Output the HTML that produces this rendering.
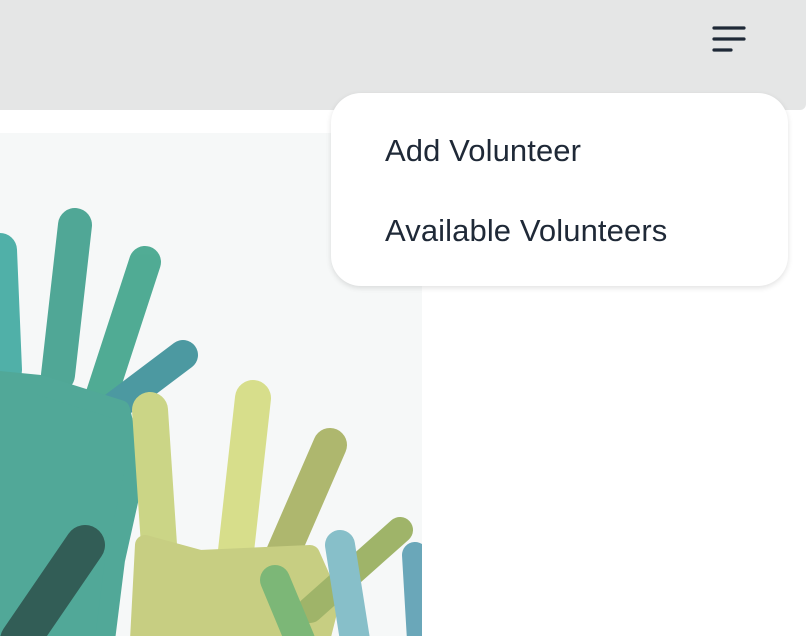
<!DOCTYPE html>
<html><head><meta charset="utf-8"><style>
html,body{margin:0;padding:0;width:806px;height:636px;overflow:hidden;background:#fff;font-family:"Liberation Sans",sans-serif}
.bar{position:absolute;left:0;top:0;width:806px;height:110px;background:#e5e6e6;border-bottom-right-radius:6px}
.img{position:absolute;left:0;top:133px;width:422px;height:503px;background:#f6f8f8;overflow:hidden}
.card{position:absolute;left:331px;top:93px;width:457px;height:193px;background:#fff;border-radius:30px;box-shadow:0 2px 6px rgba(0,0,0,.12)}
.card div{position:absolute;left:54px;font-size:31px;color:#1f2937;letter-spacing:0.1px}
</style></head><body>
<div class="bar"></div>
<svg style="position:absolute;left:710px;top:24px" width="40" height="32"><g stroke="#1f2937" stroke-width="3.2" stroke-linecap="round"><line x1="4" y1="4" x2="34" y2="4"/><line x1="4" y1="15" x2="34" y2="15"/><line x1="4" y1="26" x2="21" y2="26"/></g></svg>
<div class="img">
<svg width="422" height="503" viewBox="0 133 422 503">
<g stroke-linecap="round" stroke-linejoin="round" fill="none" opacity="0.9">
<line x1="0" y1="250" x2="5" y2="370" stroke="#3fa9a0" stroke-width="34"/>
<line x1="75" y1="225" x2="58" y2="375" stroke="#3f9f8c" stroke-width="34"/>
<line x1="145" y1="262" x2="100" y2="400" stroke="#3fa38a" stroke-width="32"/>
<line x1="183" y1="355" x2="110" y2="410" stroke="#3a8f98" stroke-width="30"/>
<path d="M-10 380 L40 385 L120 410 L135 470 L115 560 L105 640 L-10 640Z" fill="#40a08e" stroke="#40a08e" stroke-width="20"/>
<line x1="85" y1="545" x2="20" y2="640" stroke="#1d4d45" stroke-width="40"/>
<line x1="150" y1="410" x2="160" y2="560" stroke="#c7d27a" stroke-width="36"/>
<line x1="253" y1="398" x2="235" y2="560" stroke="#d4dc80" stroke-width="36"/>
<line x1="330" y1="445" x2="280" y2="560" stroke="#a7b060" stroke-width="34"/>
<path d="M145 545 L200 560 L310 555 L330 600 L320 640 L140 640Z" fill="#c3ca76" stroke="#c3ca76" stroke-width="20"/>
<line x1="400" y1="530" x2="310" y2="610" stroke="#96ad5a" stroke-width="26"/>
<line x1="275" y1="580" x2="300" y2="640" stroke="#6fb06a" stroke-width="30"/>
<line x1="340" y1="545" x2="355" y2="640" stroke="#7cb9c4" stroke-width="30"/>
<line x1="415" y1="555" x2="420" y2="640" stroke="#5b9fb3" stroke-width="26"/>
</g></svg>
</div>
<div class="card"><div style="top:40px">Add Volunteer</div><div style="top:120px">Available Volunteers</div></div>
</body></html>
